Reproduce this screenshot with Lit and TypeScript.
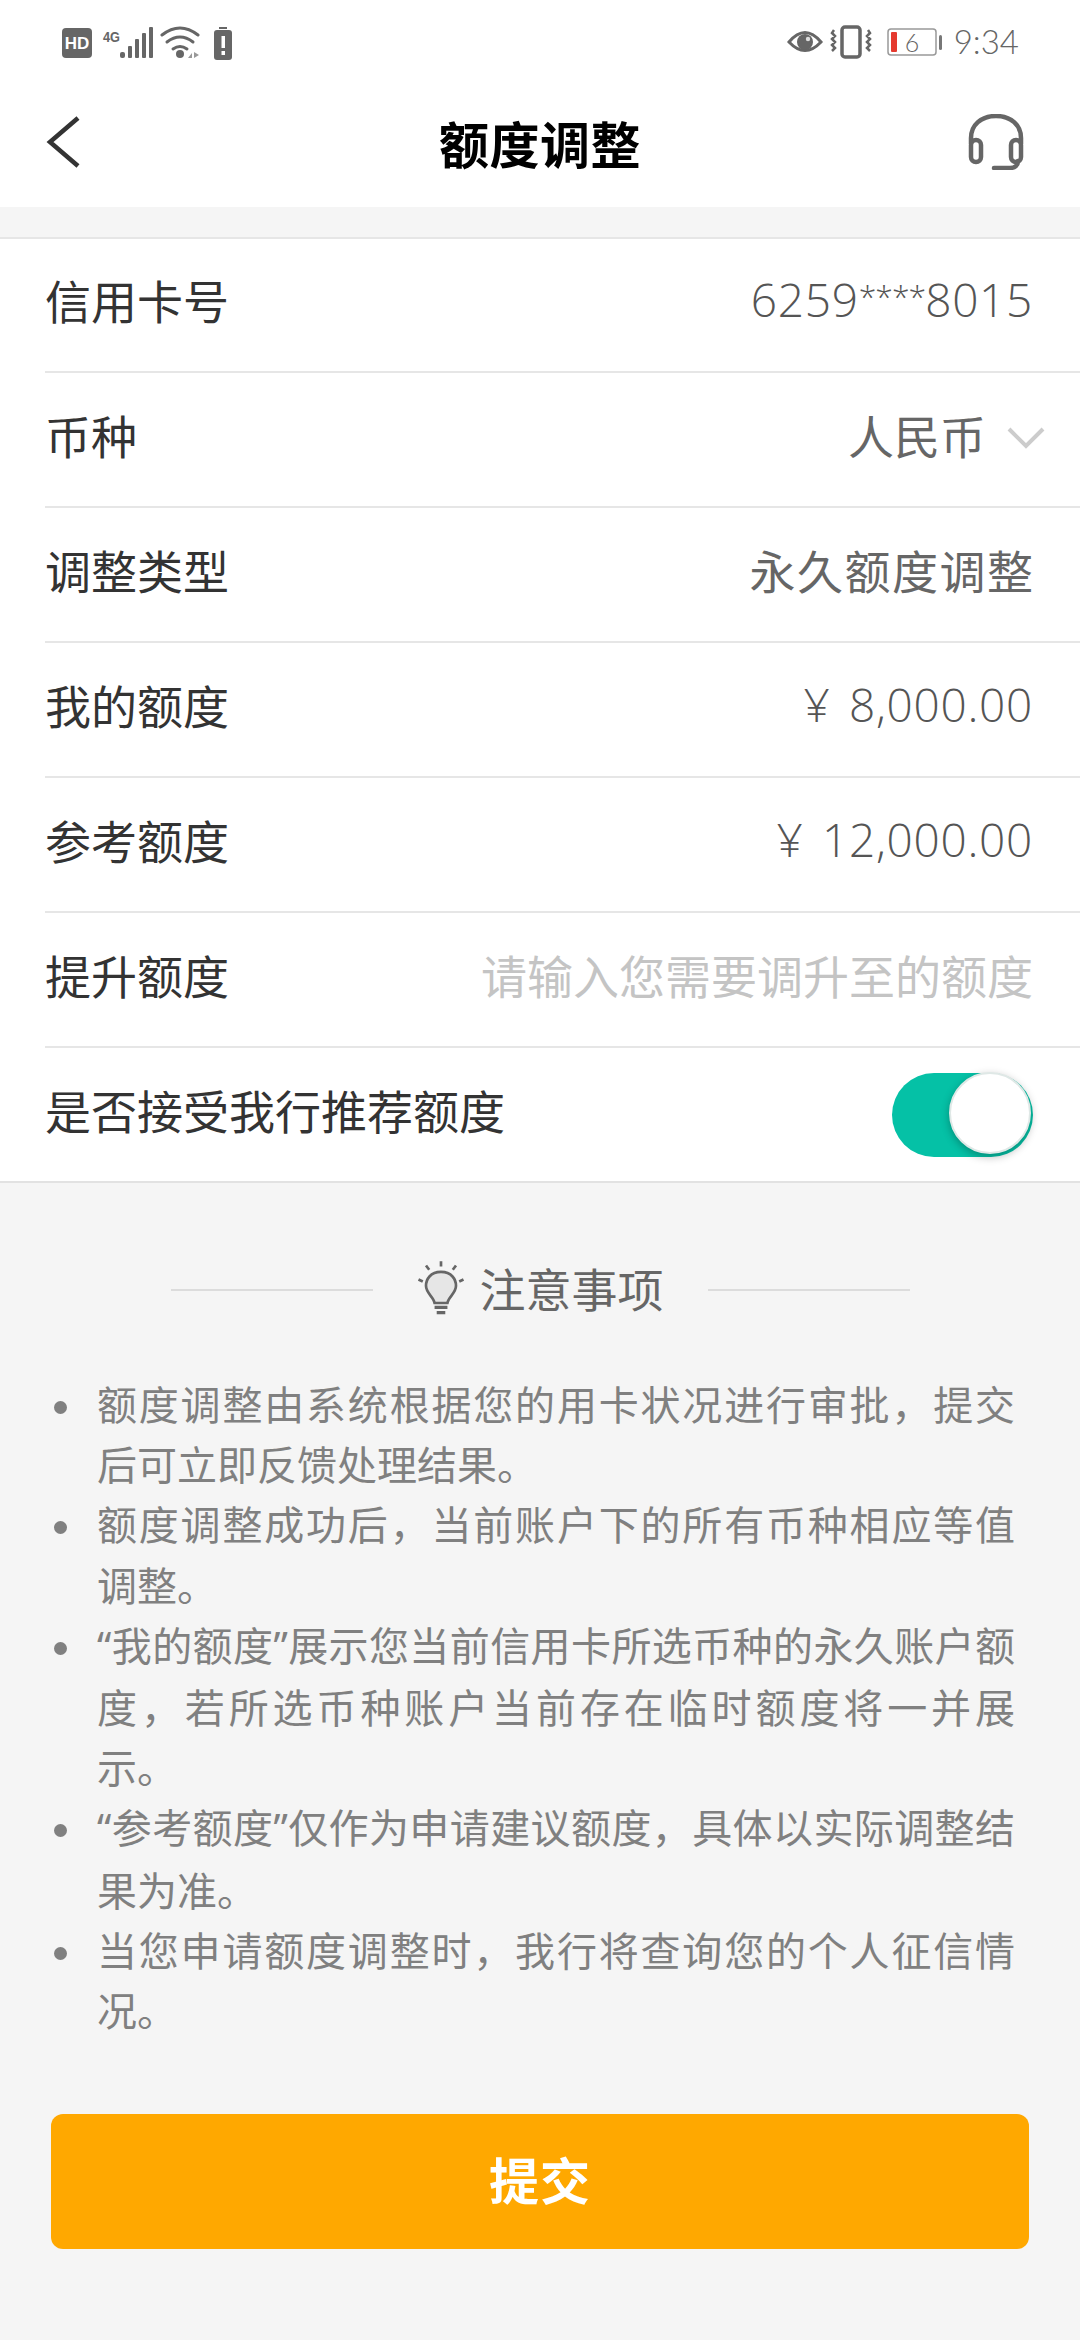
import { LitElement, html, css, svg } from "lit";
import { customElement } from "lit/decorators.js";

const q = (s: string) => html`<span class="q">${s}</span>`;

const notes = [
  html`额度调整由系统根据您的用卡状况进行审批，提交后可立即反馈处理结果。`,
  html`额度调整成功后，当前账户下的所有币种相应等值调整。`,
  html`${q("“")}我的额度${q("”")}展示您当前信用卡所选币种的永久账户额度，若所选币种账户当前存在临时额度将一并展示。`,
  html`${q("“")}参考额度${q("”")}仅作为申请建议额度，具体以实际调整结果为准。`,
  html`当您申请额度调整时，我行将查询您的个人征信情况。`,
];

@customElement("app-root")
export class AppRoot extends LitElement {
  static styles = css`
    :host { display: block; width: 1080px; height: 2340px; background: #f5f5f5; overflow: hidden;
      font-family: "Noto Sans CJK SC", "Noto Sans", sans-serif; color: #333; }
    .top { background: #fff; height: 207px; display: flex; flex-direction: column; }
    .status { height: 85px; flex: none; display: flex; align-items: center; justify-content: space-between; padding: 0 61px 0 62px; box-sizing: border-box; }
    .st-left, .st-right { display: flex; align-items: center; }
    .time { font-family: "Lato", "Open Sans", sans-serif; font-weight: 300; font-size: 33px; color: #666; margin-left: 9px; line-height: 40px; margin-top: -3px; }
    .nav { flex: 1; display: flex; align-items: center; justify-content: space-between; padding: 0 56px 0 46px; position: relative; margin-top: -8px; }
    .title { position: absolute; left: 0; right: 0; text-align: center; font-size: 50px; font-weight: 700; color: #000; line-height: 70px; letter-spacing: .5px; }
    .gap { height: 30px; }
    .form { background: #fff; border-top: 2px solid #e6e6e6; border-bottom: 2px solid #e2e2e2; }
    .row { height: 135px; margin-left: 45px; border-bottom: 2px solid #e6e6e6; box-sizing: border-box; display: flex; align-items: center; justify-content: space-between; padding-right: 47px; font-size: 46px; }
    .row.first { height: 134px; }
    .row.last { border-bottom: 0; height: 133px; }
    .label { color: #333; line-height: 60px; margin-top: -12px; }
    .value { color: #666; line-height: 60px; margin-top: -12px; display: flex; align-items: center; }
    .wide { letter-spacing: 1.5px; margin-right: -1.5px; }
    .num { font-family: "Open Sans", "Noto Sans", sans-serif; font-weight: 300; letter-spacing: .7px; color: #555; white-space: pre; display: block; }
    .yen { margin-right: 6px; }
    .stars { font-size: 32px; letter-spacing: -1px; vertical-align: 9px; line-height: 0; }
    .ph { color: #c4c4c4; }
    .cur { margin-right: -1px; }
    .chev { margin-left: 21px; margin-right: -11px; margin-top: 8px; }
    .switch { width: 141px; height: 84px; border-radius: 42px; background: #05c1a6; position: relative; }
    .knob { position: absolute; right: 2px; top: -1px; width: 78px; height: 78px; border-radius: 50%; background: #fff; border: 2px solid #dfe8e6; box-shadow: 0 3px 8px rgba(0,0,0,.28); }
    .notes-head { display: flex; align-items: center; justify-content: center; margin-top: 75px; height: 60px; }
    .line { width: 202px; height: 2px; background: #dcdcdc; margin-top: 3px; }
    .notes-title { font-size: 46px; color: #666; line-height: 60px; margin: -2px 44px 0 13px; }
    .bulb { margin-left: 42px; }
    ul { list-style: none; margin: 55px 0 0; padding: 0 65px 0 97px; }
    li { position: relative; font-size: 40px; line-height: 60.2px; color: #808080; text-align: justify; }
    li::before { content: ""; position: absolute; left: -43px; top: 28px; width: 13px; height: 13px; border-radius: 50%; background: #808080; }
    .q { font-family: "Noto Sans", sans-serif; }
    .btn { display: flex; align-items: center; justify-content: center; margin: 75px 51px 0; height: 135px; box-sizing: border-box; padding-bottom: 8px; border-radius: 12px; background: #ffa800; color: #fff; font-size: 50px; font-weight: 700; letter-spacing: 1px; }
  `;

  private statusLeft() {
    return html`
      <svg width="172" height="36" viewBox="0 0 172 36">
        <rect x="0" y="3" width="30" height="30" rx="4" fill="#666"/>
        <text x="15" y="24" text-anchor="middle" font-family="Liberation Sans" font-weight="700" font-size="17" fill="#fff">HD</text>
        <text x="41" y="17" font-family="Liberation Sans" font-weight="700" font-size="15" fill="#666" textLength="17" lengthAdjust="spacingAndGlyphs">4G</text>
        <g fill="#666">
          <rect x="58" y="27" width="5" height="6" rx="2"/><rect x="66" y="21" width="4" height="12" rx="1"/>
          <rect x="73" y="14" width="4" height="19" rx="1"/><rect x="80" y="8" width="4" height="25" rx="1"/>
          <rect x="87" y="2" width="4" height="31" rx="1"/>
        </g>
        <g fill="none" stroke="#666" stroke-width="3" stroke-linecap="round">
          <path d="M100 10 Q118 -4 136 10"/><path d="M105 17 Q118 7 131 17"/><path d="M111 24 Q118 19 125 24"/>
        </g>
        <circle cx="118" cy="29" r="4" fill="#666"/>
        <path d="M126 33 L130 28 V33 Z M132 27 V33 L137 30 Z" fill="#999"/>
        <rect x="152" y="5" width="18" height="30" rx="3" fill="#666"/>
        <rect x="157" y="2" width="8" height="2" fill="#666"/>
        <rect x="159.5" y="11" width="3.5" height="12" fill="#fff"/><rect x="159.5" y="26" width="3.5" height="4" fill="#fff"/>
      </svg>`;
  }

  private statusRight() {
    return html`
      <svg width="158" height="36" viewBox="0 0 158 36">
        <path d="M2 17 Q18 -2 34 17 Q18 34 2 17 Z" fill="none" stroke="#666" stroke-width="3"/>
        <circle cx="18" cy="17" r="8" fill="#666"/>
        <circle cx="21" cy="14" r="2.2" fill="#ddd"/>
        <rect x="55" y="2" width="18" height="30" rx="3" fill="none" stroke="#666" stroke-width="3.5"/>
        <path d="M47 5 l-2 3 l3 3 l-3 3 l3 3 l-3 3 l3 3 l-3 3 M81 5 l2 3 l-3 3 l3 3 l-3 3 l3 3 l-3 3 l3 3" fill="none" stroke="#666" stroke-width="2.5"/>
        <rect x="101" y="4" width="48" height="26" rx="3" fill="#fff" stroke="#999" stroke-width="1.5"/>
        <rect x="104" y="7" width="6" height="20" rx="1" fill="#e53a2f"/>
        <rect x="152" y="10" width="3" height="15" rx="1.5" fill="#777"/>
        <text x="125" y="27" text-anchor="middle" font-family="Lato" font-weight="300" font-size="25" fill="#666">6</text>
      </svg>
      <span class="time">9:34</span>`;
  }

  private bulb() {
    return svg`
      <path d="M24 13 C14 13 10 20 10 26 C10 33 17 36 18 42 H30 C31 36 38 33 38 26 C38 20 34 13 24 13 Z" fill="#e6e6e6" stroke="#666" stroke-width="2.5"/>
      <path d="M18 46 H30 M20 51 H28" stroke="#666" stroke-width="3" fill="none"/>
      <path d="M24 3 V8 M10 7 L13 11 M38 7 L35 11 M3 20 L7 22 M45 20 L41 22" stroke="#666" stroke-width="2.5" fill="none"/>`;
  }

  render() {
    return html`
      <div class="top">
        <div class="status">
          <div class="st-left">${this.statusLeft()}</div>
          <div class="st-right">${this.statusRight()}</div>
        </div>
        <div class="nav">
          <svg width="36" height="52" viewBox="0 0 36 52"><path d="M32 2 L4 26 L32 50" fill="none" stroke="#333" stroke-width="4.5"/></svg>
          <div class="title">额度调整</div>
          <svg width="56" height="56" viewBox="0 0 56 56" fill="none" stroke="#666" stroke-width="4.5">
            <path d="M3 30 V24 C3 11 13 2 28 2 C43 2 53 11 53 24 V30"/>
            <rect x="3" y="26" width="10" height="22" rx="5"/>
            <rect x="43" y="26" width="10" height="22" rx="5"/>
            <path d="M26 54 H42 C47 54 50 51 50 47" stroke-linecap="round"/>
          </svg>
        </div>
      </div>
      <div class="gap"></div>
      <div class="form">
        <div class="row first"><span class="label">信用卡号</span><span class="value num">6259<span class="stars">****</span>8015</span></div>
        <div class="row"><span class="label">币种</span><span class="value cur">人民币<svg class="chev" width="38" height="24" viewBox="0 0 38 24"><path d="M2 3 L19 20 L36 3" fill="none" stroke="#ccc" stroke-width="4"/></svg></span></div>
        <div class="row"><span class="label">调整类型</span><span class="value wide">永久额度调整</span></div>
        <div class="row"><span class="label">我的额度</span><span class="value num"><span class="yen">¥</span> 8,000.00</span></div>
        <div class="row"><span class="label">参考额度</span><span class="value num"><span class="yen">¥</span> 12,000.00</span></div>
        <div class="row"><span class="label">提升额度</span><span class="value ph">请输入您需要调升至的额度</span></div>
        <div class="row last"><span class="label">是否接受我行推荐额度</span><div class="switch"><div class="knob"></div></div></div>
      </div>
      <div class="notes-head">
        <div class="line"></div>
        <svg class="bulb" width="52" height="60" viewBox="0 0 48 56">${this.bulb()}</svg>
        <div class="notes-title">注意事项</div>
        <div class="line"></div>
      </div>
      <ul>${notes.map((n) => html`<li>${n}</li>`)}</ul>
      <div class="btn">提交</div>
    `;
  }
}
